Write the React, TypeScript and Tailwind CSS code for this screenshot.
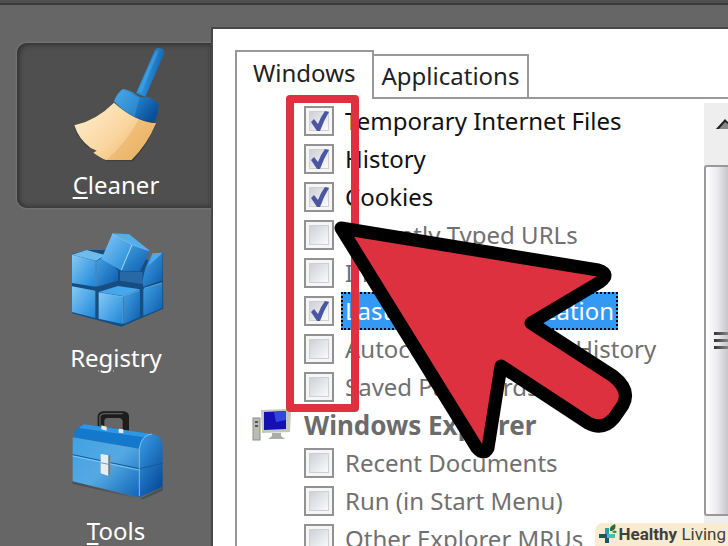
import { useState } from 'react'
import type { ReactNode } from 'react'
import clsx from 'clsx'

// ============================================
// Sidebar icons
// ============================================

function BroomIcon() {
    return (
        <svg width="100" height="120" viewBox="194 135 300 360" aria-hidden="true">
            <defs>
                <linearGradient id="broom-handle" x1="0" y1="0" x2="1" y2="0.4">
                    <stop offset="0" stopColor="#1f7fcb" />
                    <stop offset="0.5" stopColor="#2a90da" />
                    <stop offset="1" stopColor="#0f5ca6" />
                </linearGradient>
                <linearGradient id="broom-cap" x1="0" y1="0" x2="1" y2="0.6">
                    <stop offset="0" stopColor="#4aa6e4" />
                    <stop offset="0.5" stopColor="#2380c9" />
                    <stop offset="1" stopColor="#0b4f98" />
                </linearGradient>
                <linearGradient id="broom-bristle" x1="0" y1="0" x2="1" y2="0.7">
                    <stop offset="0" stopColor="#fff0d2" />
                    <stop offset="0.6" stopColor="#fad6a0" />
                    <stop offset="1" stopColor="#eeb566" />
                </linearGradient>
            </defs>
            <path d="M218 378 L226 402 L252 438 L284 452 L278 460 L314 484 H396 L430 440 L466 372 L400 350 Z" fill="#333" opacity="0.5" />
            <path d="M460 152 Q464 142 476 145 Q490 147 489 160 L432 290 L404 280 Z" fill="url(#broom-handle)" />
            <path d="M463 156 L472 152 L420 278 L408 276 Z" fill="#57b2ec" opacity="0.4" />
            <path d="M338 308 Q284 362 219 376 Q232 418 268 444 L286 452 L276 458 Q298 474 314 480 H390 Q436 436 464 370 Q400 364 338 308 Z" fill="url(#broom-bristle)" />
            <path d="M412 359 Q376 426 316 480 H390 Q436 436 464 370 Q430 368 412 359 Z" fill="#eab366" opacity="0.6" />
            <path d="M338 304 Q346 280 364 267 Q388 270 404 284 Q422 296 436 290 Q460 296 472 314 Q470 344 460 368 Q392 362 338 304 Z" fill="url(#broom-cap)" />
            <path d="M366 270 Q398 284 414 294 L400 350 Q362 332 340 303 Q350 282 366 270 Z" fill="#5ab3ec" opacity="0.3" />
        </svg>
    )
}

function RegistryIcon() {
    return (
        <svg width="100" height="120" viewBox="194 24 300 360" aria-hidden="true">
            <defs>
                <linearGradient id="cube-left" x1="0" y1="0" x2="1" y2="1">
                    <stop offset="0" stopColor="#85caf6" />
                    <stop offset="1" stopColor="#1d86d8" />
                </linearGradient>
                <linearGradient id="cube-right" x1="0" y1="0" x2="1" y2="1">
                    <stop offset="0" stopColor="#43a2e6" />
                    <stop offset="1" stopColor="#0c5cab" />
                </linearGradient>
            </defs>
            <path d="M212 132 L256 120 L320 120 L440 150 L484 128 L486 296 L360 350 L212 310 Z" fill="#174e82" />
            <path d="M212 134 L282 152 V230 L212 219 Z" fill="url(#cube-left)" />
            <path d="M212 134 L256 120 L312 136 L284 152 Z" fill="#6dbcf0" />
            <path d="M286 153 L312 138 L350 182 V212 L286 230 Z" fill="url(#cube-right)" />
            <path d="M356 184 L424 186 V222 L356 212 Z" fill="#2868a5" />
            <path d="M424 216 Q428 170 454 130 L483 128 V211 L426 230 Z" fill="url(#cube-right)" />
            <path d="M454 130 L483 128 L474 138 L440 168 Z" fill="#4aaaf0" />
            <path d="M212 229 L282 242 V324 L212 306 Z" fill="url(#cube-left)" />
            <path d="M292 246 L350 228 L416 238 L366 258 Z" fill="#46a8ec" />
            <path d="M292 248 L364 260 V342 L292 326 Z" fill="url(#cube-left)" />
            <path d="M368 260 L416 241 V320 L368 342 Z" fill="url(#cube-right)" />
            <path d="M426 237 L483 220 V294 L426 317 Z" fill="url(#cube-right)" />
            <path d="M428 235 L482 219 M292 248 L364 260 L414 241 M284 152 V228 M365 260 V340" stroke="#8accf6" strokeWidth="3" fill="none" opacity="0.7" />
            <path d="M334 70 L392 104 L360 182 L300 147 Z" fill="url(#cube-left)" />
            <path d="M334 70 L384 73 L446 123 L392 104 Z" fill="#54aeea" />
            <path d="M392 104 L446 123 L416 184 L360 182 Z" fill="url(#cube-right)" />
            <path d="M392 104 L360 180" stroke="#a9dcfa" strokeWidth="3" fill="none" />
            <path d="M334 72 L392 104 L442 122" stroke="#8accf6" strokeWidth="3" fill="none" opacity="0.6" />
        </svg>
    )
}

function ToolboxIcon() {
    return (
        <svg width="100" height="120" viewBox="194 543 300 360" aria-hidden="true">
            <defs>
                <linearGradient id="box-front" x1="0" y1="0" x2="1" y2="1">
                    <stop offset="0" stopColor="#3fa2e4" />
                    <stop offset="0.5" stopColor="#55a9e2" />
                    <stop offset="1" stopColor="#0d66b8" />
                </linearGradient>
                <linearGradient id="box-side" x1="0" y1="0" x2="0.6" y2="1">
                    <stop offset="0" stopColor="#3a9de6" />
                    <stop offset="1" stopColor="#084f9d" />
                </linearGradient>
            </defs>
            <path d="M212 814 L416 866 L486 830 L484 842 L424 868 L214 822 Z" fill="#2c3c4c" opacity="0.5" />
            <path d="M289 655 V618 Q291 606 306 604 H366 Q382 606 383 618 V668 H364 V632 Q362 624 354 624 H318 Q310 624 309 632 V655 Z" fill="#1d1d1d" />
            <path d="M296 650 V618 Q300 611 310 611 H364" stroke="#5e5e5e" strokeWidth="4" fill="none" />
            <path d="M216 682 Q222 650 248 643 L452 672 Q420 680 414 716 Z" fill="#1478cc" />
            <path d="M248 643 L452 672 Q436 674 428 682 L232 654 Z" fill="#2f97e2" />
            <path d="M214 682 L414 716 V862 L214 814 Z" fill="url(#box-front)" />
            <path d="M414 716 Q420 672 454 672 Q480 676 484 708 V830 L414 862 Z" fill="url(#box-side)" />
            <path d="M214 734 L414 776 L484 760" stroke="#125a9c" strokeWidth="3" fill="none" />
            <path d="M214 738 L412 780 M414 716 V858 M414 716 Q420 674 452 672" stroke="#8bd0f8" strokeWidth="3" fill="none" opacity="0.8" />
            <path d="M300 646 L316 650 V662 L300 658 Z M352 656 L366 658 V670 L352 668 Z" fill="#e8e8e8" />
            <path d="M298 732 L322 736 V798 L298 790 Z" fill="#e8edf0" />
            <path d="M322 736 L327 734 V794 L322 798 Z M298 758 L322 763" fill="#4a7da8" stroke="#7a95a8" strokeWidth="3" />
        </svg>
    )
}

// ============================================
// Sidebar
// ============================================

interface NavItemProps {
    icon: ReactNode
    active?: boolean
    children: ReactNode
}

function NavItem({ icon, active = false, children }: NavItemProps) {
    return (
        <button
            type="button"
            className={clsx(
                'flex w-full shrink-0 flex-col items-center gap-1.5 rounded-l-[10px] pt-0.5 pb-[9px] pl-1 text-[24px] leading-7 text-white',
                active && 'bg-[#4f4f4f] shadow-[inset_2px_2px_5px_#333,inset_0_-2px_4px_#3c3c3c,0_0_2px_1px_#777]'
            )}
        >
            {icon}
            <span>{children}</span>
        </button>
    )
}

function Mnemonic({ children }: { children: string }) {
    return <span className="underline decoration-2 underline-offset-3">{children}</span>
}

// ============================================
// Checklist
// ============================================

interface CheckRowProps {
    label: string
    initial?: boolean
    selected?: boolean
}

function CheckRow({ label, initial = false, selected = false }: CheckRowProps) {
    const [checked, setChecked] = useState(initial)

    return (
        <li>
            <label className="flex h-[38px] items-center gap-[7px] pl-[67px]">
                <span className="relative size-[30px] shrink-0">
                    <input
                        type="checkbox"
                        checked={checked}
                        onChange={(e) => setChecked(e.target.checked)}
                        className="block size-full appearance-none border-2 border-[#929292] bg-[#f6f6f6]"
                    />
                    <svg viewBox="0 0 30 30" className="pointer-events-none absolute inset-0" aria-hidden="true">
                        <defs>
                            <linearGradient id="box-fill" x1="0" y1="0" x2="1" y2="1">
                                <stop offset="0" stopColor="#cccfd6" />
                                <stop offset="1" stopColor="#fcfcfc" />
                            </linearGradient>
                        </defs>
                        <rect x="5.5" y="5.5" width="19" height="19" fill="url(#box-fill)" stroke="#cfcfd4" />
                        {checked && (
                            <path d="M7 16 L10 13 L14 18 Q17 10 21 5 L25 6 Q20 14 16 25 L13 25 Z" fill="#4a57a0" />
                        )}
                    </svg>
                </span>
                <span
                    className={clsx(
                        'flex h-full items-center border-2 border-dotted px-0.5 text-[24px] whitespace-nowrap',
                        selected && 'border-black bg-[#3399f5] text-white',
                        !selected && 'border-transparent',
                        !selected && (checked ? 'text-[#111]' : 'text-[#707070]')
                    )}
                >
                    {label}
                </span>
            </label>
        </li>
    )
}

function ComputerIcon() {
    return (
        <svg width="40" height="34" viewBox="0 0 40 34" aria-hidden="true">
            <rect x="1" y="10" width="7" height="22" fill="#b9bdb9" stroke="#8b8f8b" />
            <path d="M3 14 H6 M3 18 H6" stroke="#555" strokeWidth="2" />
            <path d="M9 2 L37 1 L39 3 L38 24 L10 25 Z" fill="#c3c7bd" />
            <path d="M12 4 L34 3 V21 L12 22 Z" fill="#1410b4" />
            <path d="M22 4 L34 3 V12 L24 14 Z" fill="#3346e0" />
            <path d="M20 25 H29 V28 L33 31 H16 L20 28 Z" fill="#a9ada5" />
        </svg>
    )
}

function ScrollBar() {
    return (
        <div className="mt-1 flex w-6 shrink-0 flex-col bg-[#eeeeee]" aria-hidden="true">
            <div className="flex h-[62px] items-start justify-end overflow-hidden pt-4">
                <svg width="12" height="11" viewBox="0 0 12 11">
                    <path d="M0 10 L9 1 L12 4 V10 Z" fill="#888" />
                    <path d="M0 10 L9 0 L12 3 V5 L9 3 L3 10 Z" fill="#222" />
                </svg>
            </div>
            <div className="flex h-[351px] flex-col items-end justify-center gap-1 rounded-l-[3px] border-2 border-r-0 border-[#999] bg-linear-to-r from-white via-[#ececee] to-[#c6c6cc]">
                <span className="h-[3px] w-3.5 bg-linear-to-r from-[#333] to-[#888]" />
                <span className="h-[3px] w-3.5 bg-linear-to-r from-[#333] to-[#888]" />
                <span className="h-[3px] w-3.5 bg-linear-to-r from-[#333] to-[#888]" />
            </div>
        </div>
    )
}

// ============================================
// Annotations
// ============================================

function PointerArrow() {
    return (
        <svg width="300" height="242" viewBox="334 220 300 242" className="pointer-events-none absolute top-[220px] left-[334px]" aria-hidden="true">
            <path
                d="M341 228 L598 270 Q611 274 600 282 L531 323 L613 376 Q631 390 623 405 L614 418 Q603 431 588 423 L501 366 L488 448 Q484 456 477 448 Z"
                fill="#de3140"
                stroke="#000"
                strokeWidth="13"
                strokeLinejoin="round"
            />
        </svg>
    )
}

function Watermark() {
    return (
        <div className="absolute right-0 bottom-0 flex h-[23px] items-center gap-0.5 rounded-tl-lg bg-[#f8ebd0] pr-0.5 pl-[3px] font-[Roboto,sans-serif] text-[17px] leading-none text-[#3f3f3f]">
            <svg width="19" height="21" viewBox="0 0 19 21" aria-hidden="true">
                <path d="M7 4 H11 V19 H7 Z" fill="#2a9fa6" />
                <path d="M1 10 H17 V14 H1 Z" fill="#45bcc0" />
                <path d="M1 10 H9 V14 H1 Z M7 14 H11 V19 H7 Z" fill="#1d5560" />
                <path d="M12 7 Q11 2 17 0 Q19 5 14 7 Z" fill="#2f6b35" />
                <path d="M14 8 Q17 5 19 8 Q17 10 14 8 Z" fill="#3f7d3c" />
            </svg>
            <span>
                <b>Healthy</b> Living
            </span>
        </div>
    )
}

// ============================================
// App
// ============================================

export default function App() {
    return (
        <div className="relative flex h-screen flex-col overflow-hidden bg-[#666] font-['Noto_Sans','Open_Sans',sans-serif]">
            <header className="h-[5px] shrink-0 border-b-2 border-[#3a3a3a] bg-[#505050]" />

            <div className="flex min-h-0 flex-1">
                <nav className="flex w-[211px] shrink-0 flex-col gap-2 pt-[38px] pl-[17px]">
                    <NavItem icon={<BroomIcon />} active>
                        <Mnemonic>C</Mnemonic>leaner
                    </NavItem>
                    <NavItem icon={<RegistryIcon />}>
                        Re<Mnemonic>g</Mnemonic>istry
                    </NavItem>
                    <NavItem icon={<ToolboxIcon />}>
                        <Mnemonic>T</Mnemonic>ools
                    </NavItem>
                </nav>

                <main className="mt-[22px] flex min-w-0 flex-1 flex-col border-t-2 border-l-2 border-[#484848] bg-white pt-[21px] pl-[22px]">
                    <div className="flex shrink-0 items-end text-[24px] text-[#222]" role="tablist">
                        <button type="button" role="tab" aria-selected="true" className="h-[49px] border-2 border-b-0 border-[#999] px-4 pb-1.5">
                            Windows
                        </button>
                        <button type="button" role="tab" aria-selected="false" className="h-[45px] border-2 border-l-0 border-[#999] px-2 pb-0.5">
                            Applications
                        </button>
                        <div className="flex-1 self-stretch border-b-2 border-[#999]" />
                    </div>

                    <div className="flex min-h-0 flex-1 border-l-2 border-[#999]">
                        <ul className="min-w-0 flex-1 pt-[3px]">
                            <CheckRow label="Temporary Internet Files" initial />
                            <CheckRow label="History" initial />
                            <CheckRow label="Cookies" initial />
                            <CheckRow label="Recently Typed URLs" />
                            <CheckRow label="Index.dat files" />
                            <CheckRow label="Last Download Location" initial selected />
                            <CheckRow label="Autocomplete Form History" />
                            <CheckRow label="Saved Passwords" />
                            <li className="flex h-[38px] items-center gap-3 pl-[15px] text-[26px] font-bold text-[#6b6b6b]">
                                <ComputerIcon />
                                <span>Windows Explorer</span>
                            </li>
                            <CheckRow label="Recent Documents" />
                            <CheckRow label="Run (in Start Menu)" />
                            <CheckRow label="Other Explorer MRUs" />
                        </ul>
                        <ScrollBar />
                    </div>
                </main>
            </div>

            <div className="pointer-events-none absolute top-[95px] left-[286px] h-[317px] w-[73px] rounded-[4px] border-8 border-[#de3140]" />
            <PointerArrow />
            <Watermark />
        </div>
    )
}
